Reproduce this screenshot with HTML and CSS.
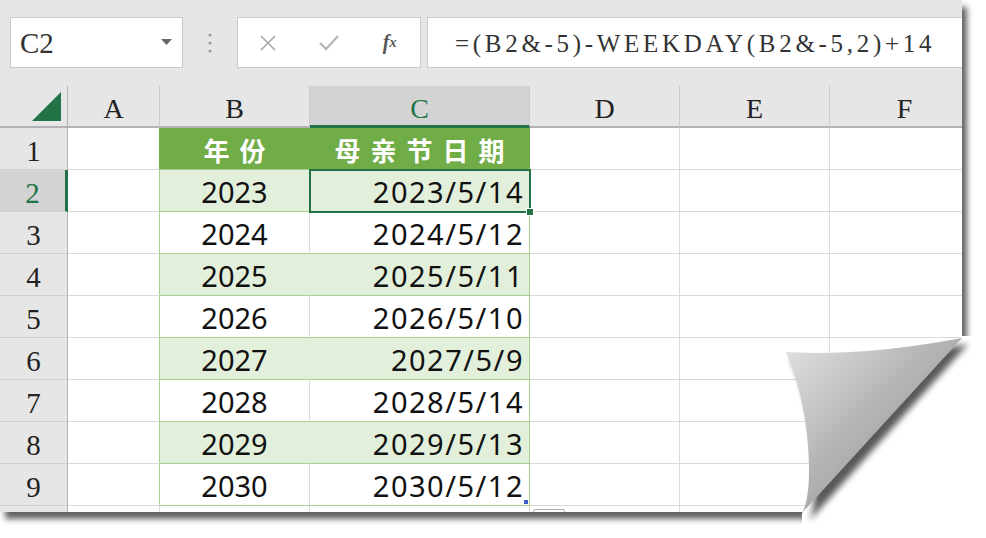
FILE: index.html
```html
<!DOCTYPE html>
<html lang="zh-CN">

<head>
  <meta charset="UTF-8">
  <title>母亲节日期</title>
  <link rel="stylesheet" href="styles.css">
</head>

<body>
  <div class="sheet">
    <div class="toolbar">
      <div class="namebox">
        <span>C2</span>
        <svg width="12" height="7" viewBox="0 0 12 7"><path d="M0 0h11L5.5 6z" fill="#666"/></svg>
      </div>
      <div class="grip">
        <svg width="6" height="22" viewBox="0 0 6 22"><circle cx="3" cy="3" r="1.6" fill="#9c9c9c"/><circle cx="3" cy="11" r="1.6" fill="#9c9c9c"/><circle cx="3" cy="19" r="1.6" fill="#9c9c9c"/></svg>
      </div>
      <div class="fxbtns">
        <span class="btn"><svg width="18" height="18" viewBox="0 0 18 18"><path d="M2 2l14 14M16 2L2 16" stroke="#a8a8a8" stroke-width="1.6"/></svg></span>
        <span class="btn"><svg width="22" height="18" viewBox="0 0 22 18"><path d="M2 9l6 6L20 2" stroke="#b8b8b8" stroke-width="2.4" fill="none"/></svg></span>
        <span class="btn fx">f<sub>x</sub></span>
      </div>
      <div class="formula">=(B2&amp;-5)-WEEKDAY(B2&amp;-5,2)+14</div>
    </div>

    <div class="grid">
      <div class="g h corner"><svg width="30" height="30" viewBox="0 0 30 30"><path d="M0 29L29 0v29z" fill="#217346"/></svg></div>
      <div class="g h">A</div>
      <div class="g h">B</div>
      <div class="g h sel">C</div>
      <div class="g h">D</div>
      <div class="g h">E</div>
      <div class="g h">F</div>

      <div class="g r">1</div>
      <div class="g a1"></div>
      <div class="g t1 tb">年份</div>
      <div class="g t1 tc">母亲节日期</div>
      <div class="g"></div><div class="g"></div><div class="g"></div>

      <div class="g r rsel">2</div>
      <div class="g at"></div>
      <div class="g ts tb">2023</div>
      <div class="g ts tc active">2023/5/14</div>
      <div class="g"></div><div class="g"></div><div class="g"></div>

      <div class="g r">3</div>
      <div class="g at"></div>
      <div class="g tw tb">2024</div>
      <div class="g tw tc">2024/5/12</div>
      <div class="g"></div><div class="g"></div><div class="g"></div>

      <div class="g r">4</div>
      <div class="g at"></div>
      <div class="g ts tb">2025</div>
      <div class="g ts tc">2025/5/11</div>
      <div class="g"></div><div class="g"></div><div class="g"></div>

      <div class="g r">5</div>
      <div class="g at"></div>
      <div class="g tw tb">2026</div>
      <div class="g tw tc">2026/5/10</div>
      <div class="g"></div><div class="g"></div><div class="g"></div>

      <div class="g r">6</div>
      <div class="g at"></div>
      <div class="g ts tb">2027</div>
      <div class="g ts tc">2027/5/9</div>
      <div class="g"></div><div class="g"></div><div class="g"></div>

      <div class="g r">7</div>
      <div class="g at"></div>
      <div class="g tw tb">2028</div>
      <div class="g tw tc">2028/5/14</div>
      <div class="g"></div><div class="g"></div><div class="g"></div>

      <div class="g r">8</div>
      <div class="g at"></div>
      <div class="g ts tb">2029</div>
      <div class="g ts tc">2029/5/13</div>
      <div class="g"></div><div class="g"></div><div class="g"></div>

      <div class="g r">9</div>
      <div class="g at"></div>
      <div class="g tw tb">2030</div>
      <div class="g tw tc last">2030/5/12</div>
      <div class="g"></div><div class="g"></div><div class="g"></div>

      <div class="g r"></div>
      <div class="g"></div>
      <div class="g"></div>
      <div class="g"></div>
      <div class="g qa"><span class="qbox"></span></div>
      <div class="g"></div><div class="g"></div>
    </div>
  </div>

  <!-- page curl over the bottom right corner -->
  <svg class="curl" width="986" height="538" viewBox="0 0 986 538">
    <defs>
      <linearGradient id="curlFill" x1="0" y1="0" x2="1" y2="1">
        <stop offset="0" stop-color="#e2e2e2"/>
        <stop offset="0.45" stop-color="#b4b4b4"/>
        <stop offset="1" stop-color="#868686"/>
      </linearGradient>
      <filter id="soft" x="-20%" y="-20%" width="140%" height="140%">
        <feGaussianBlur stdDeviation="3"/>
      </filter>
    </defs>
    <path d="M962 336H990V540H802V513z" fill="#fff"/>
    <path d="M791 358Q865 363 968 344L809 521C820 500 818 415 791 358z" fill="#000" opacity="0.65" filter="url(#soft)"/>
    <path d="M786 352Q860 357 962 338L802 513C814 495 812 410 786 352z" fill="url(#curlFill)"/>
  </svg>
</body>

</html>
```

FILE: styles.css
```css
html,
body {
  margin: 0;
  background: #fff;
}

body {
  position: relative;
  width: 986px;
  height: 538px;
  overflow: hidden;
}

div.sheet {
  width: 962px;
  height: 512px;
  overflow: hidden;
  background: #fff;
  box-shadow: 5px 7px 6px rgba(0, 0, 0, 0.62);
  font-family: "Liberation Serif", serif;
  color: #222;
}

/* formula bar */
div.toolbar {
  height: 86px;
  box-sizing: border-box;
  padding-top: 17px;
  background: #e6e6e6;
  display: flex;
  align-items: flex-start;
}

div.namebox {
  margin-left: 10px;
  width: 173px;
  height: 51px;
  box-sizing: border-box;
  padding: 2px 9px 0 9px;
  background: #fff;
  border: 1px solid #cacaca;
  display: flex;
  align-items: center;
  justify-content: space-between;
  font-size: 29px;
  color: #333;
}

div.namebox svg {
  margin-top: -3px;
}

div.grip {
  width: 54px;
  height: 51px;
  display: flex;
  align-items: center;
  justify-content: center;
}

div.fxbtns {
  width: 184px;
  height: 51px;
  box-sizing: border-box;
  background: #fff;
  border: 1px solid #cacaca;
  display: grid;
  grid-template-columns: repeat(3, 1fr);
  align-items: center;
  justify-items: center;
}

span.btn {
  display: flex;
  align-items: center;
}

span.fx {
  font-style: italic;
  font-weight: bold;
  font-size: 20px;
  color: #555;
}

span.fx sub {
  font-size: 14px;
  vertical-align: -1px;
}

div.formula {
  margin-left: 6px;
  flex: 1;
  height: 51px;
  box-sizing: border-box;
  padding: 2px 0 0 27px;
  background: #fff;
  border: 1px solid #cacaca;
  border-right: none;
  display: flex;
  align-items: center;
  font-size: 25px;
  letter-spacing: 3.7px;
  color: #333;
  white-space: nowrap;
}

/* cells */
div.grid {
  display: grid;
  grid-template-columns: 68px 92px 150px 220px 150px 150px 150px;
  grid-auto-rows: 42px;
}

div.g {
  box-sizing: border-box;
  border-right: 1px solid #dadada;
  border-bottom: 1px solid #dadada;
  display: flex;
  align-items: center;
  justify-content: center;
  white-space: nowrap;
  overflow: hidden;
}

div.h {
  background: #e6e6e6;
  border-right-color: #c9c9c9;
  border-bottom: 2px solid #b2b2b2;
  padding-top: 6px;
  font-size: 28px;
}

div.h.sel {
  background: #d3d3d3;
  color: #217346;
  border-bottom: 3px solid #217346;
  padding-top: 7px;
}

div.corner {
  justify-content: flex-end;
  align-items: flex-end;
  padding: 0 5px 4px 0;
  border-right-color: #b2b2b2;
}

div.r {
  background: #e6e6e6;
  border-right: 1px solid #b2b2b2;
  border-bottom-color: #d0d0d0;
  padding-top: 5px;
  font-size: 29px;
}

div.r.rsel {
  background: #d3d3d3;
  color: #217346;
  border-right: 3px solid #217346;
}

div.a1 {
  border-right-color: #70ad47;
}

div.at {
  border-right-color: #a9d08e;
}

div.tb,
div.tc {
  font-family: "Noto Sans", sans-serif;
  font-size: 29px;
  color: #111;
  padding-top: 2px;
  border-bottom-color: #a9d08e;
}

div.tc {
  justify-content: flex-end;
  padding-right: 5px;
  letter-spacing: 1.5px;
  border-right-color: #a9d08e;
}

div.t1 {
  background: #70ad47;
  color: #fff;
  font-family: "Noto Sans CJK SC", sans-serif;
  font-weight: bold;
  font-size: 26px;
  letter-spacing: 10px;
  padding-left: 10px;
  border-right-color: #70ad47;
}

div.t1.tc {
  justify-content: center;
  padding-right: 0;
  color: #fff;
}

div.ts {
  background: #e2efda;
}

div.ts.tb {
  border-right-color: #e2efda;
}

div.tw.tb {
  border-right-color: #dadada;
}

div.active {
  position: relative;
  z-index: 1;
  overflow: visible;
  outline: 2px solid #217346;
  outline-offset: -1px;
}

div.active::after {
  content: "";
  position: absolute;
  right: -5px;
  bottom: -5px;
  width: 6px;
  height: 6px;
  background: #217346;
  border: 1px solid #fff;
}

div.last {
  position: relative;
}

div.last::after {
  content: "";
  position: absolute;
  right: 1px;
  bottom: 1px;
  width: 4px;
  height: 4px;
  background: #3a5bc7;
}

div.qa {
  align-items: flex-start;
  justify-content: flex-start;
}

span.qbox {
  margin: 3px 0 0 3px;
  width: 32px;
  height: 8px;
  box-sizing: border-box;
  border: 1px solid #b0b0b0;
  border-radius: 2px;
}

svg.curl {
  position: absolute;
  left: 0;
  top: 0;
  pointer-events: none;
}
```
